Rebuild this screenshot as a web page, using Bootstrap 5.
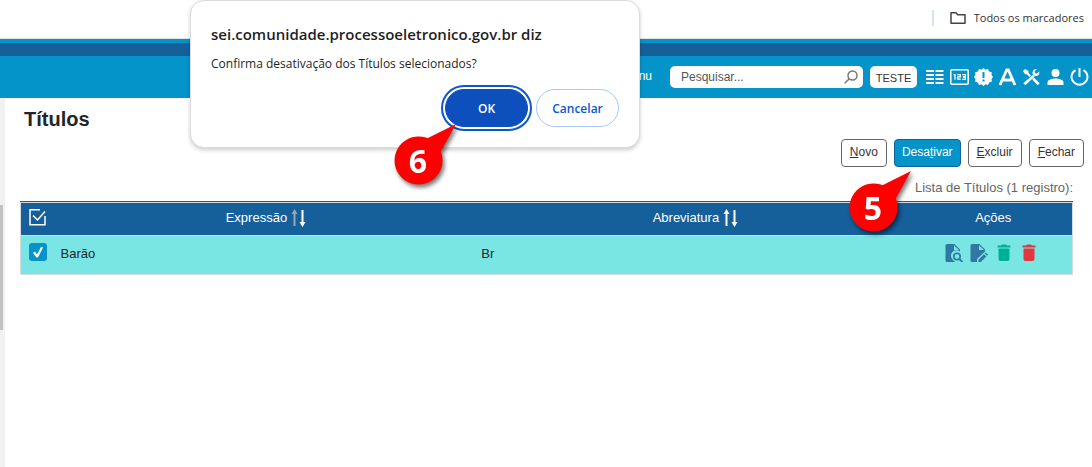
<!DOCTYPE html>
<html lang="pt-br">
<head>
<meta charset="utf-8">
<meta name="viewport" content="width=device-width, initial-scale=1">
<title>SEI - Títulos</title>
<link href="https://cdn.jsdelivr.net/npm/bootstrap@5.3.0/dist/css/bootstrap.min.css" rel="stylesheet">
<style>
:root { --sei-blue:#0494c9; --sei-dark:#155f9b; --chrome:"Open Sans","Noto Sans",sans-serif; }
body { font-family:"Liberation Sans",Arial,sans-serif; font-size:12px; line-height:16px; color:#212529; background:#fff; min-height:100vh; }
svg { display:block; }
.plain { border:0; padding:0; background:none; color:inherit; }
.bookmarks { height:39px; padding:0 8px 3px 0; border-bottom:1px solid #dde1e3; font-family:var(--chrome); font-size:11px; color:#333; }
.bookmarks a { color:inherit; }
.split { width:2px; height:16px; background:#d3e3fd; margin-right:16px; }
.strip { height:17px; background:var(--sei-dark); border-top:4px solid var(--sei-blue); }
.topnav { height:42px; background:var(--sei-blue); padding-right:3px; }
.menu-link { color:#fff; margin-right:18px; padding-bottom:2px; }
.search { width:193px; height:22px; background:#fff; border-radius:5px; padding:0 5px 0 11px; margin-right:7px; }
.search input { font-size:12px; line-height:16px; color:#555; min-width:0; outline:0; }
.search input::placeholder { color:#555; opacity:1; }
.unit { width:47px; height:22px; padding-top:2px; border-radius:5px; background:#fff; color:#333; margin-right:9px; font-size:11px; }
.tools { gap:5px; color:#fff; }
.track { width:5px; background:#f1f1f1; padding-top:107px; }
.thumb { width:3px; height:125px; background:#c1c1c1; }
h1 { font-size:20px; line-height:24px; font-weight:700; padding:9px 0 0 19px; margin:0; }
.commands { gap:7px; padding:8px 8px 0 0; }
.cmd { height:28px; padding:0 8px 2px; border:1px solid #666; border-radius:4px; background:#fff; color:#333; line-height:24px; }
.cmd-on { background:var(--sei-blue); border-color:var(--sei-dark); color:#fff; padding-left:7px; padding-right:7px; }
.listing { margin:0 19px 0 15px; }
.titles { width:100%; table-layout:fixed; caption-side:top; font-size:13px; border:1px solid #d5dce0; border-top:0; }
.titles caption { line-height:16px; text-align:right; color:#666; padding:13px 0 5px; border-bottom:1px solid #495e12; }
.titles th { height:33px; background:var(--sei-dark); color:#fff; font-weight:400; text-align:center; padding:0 0 3px; border-top:1px solid #d5dce0; border-bottom:1px solid #d5dce0; }
.titles td { height:39px; background:#7ae6e4; padding:0 5px 2px; }
.titles th:first-child, .titles td:first-child { padding:0 0 0 8px; text-align:left; }
.col-check { width:35px; } .col-name { width:40%; } .col-act { width:158px; }
.titles .form-check-input { display:block; width:18px; height:18px; margin:0 0 6px; border-radius:3px; border:0; }
.titles .form-check-input:checked { background-color:var(--sei-blue); background-image:url("data:image/svg+xml,%3Csvg xmlns='http://www.w3.org/2000/svg' viewBox='0 0 18 18'%3E%3Cpath fill='%23fff' d='M4 10l2-1.5 2 3L12 4l2 .5-5 10H7.500z'/%3E%3C/svg%3E"); }
.row-tools { gap:7px; padding:0 3px 3px 0; color:#2f78a3; }
.sei-dialog { left:190px; top:0; width:450px; min-height:148px; padding:23px 20px 20px; border:1px solid #dadce0; border-radius:14px; background:#fff; box-shadow:0 2px 4px #0003; font-family:var(--chrome); }
.sei-dialog h2 { font-size:15px; line-height:20px; font-weight:600; margin:0 0 11px; color:#1f1f1f; }
.sei-dialog p { font-size:12px; line-height:18px; margin:0 0 16px; color:#1f1f1f; }
.dlg-btn { height:38px; width:83px; border-radius:19px; font-size:12px; font-weight:600; border:1px solid #a8c7fa; background:#fff; color:#0b57d0; padding:1px 0 0; }
.dlg-ok { background:#0d4fbc; border-color:#0d4fbc; color:#fff; outline:2px solid #0b57d0; outline-offset:2px; }
.callout text { font:700 32px "Open Sans",sans-serif; fill:#fff; text-anchor:middle; }
.callout { filter:drop-shadow(2px 3px 2px #0008); z-index:5; }
.step6 { left:392px; top:120px; } .step5 { right:177px; top:167px; }
</style>
</head>
<body class="d-flex flex-column position-relative">
<div class="bookmarks d-flex align-items-center justify-content-end">
  <span class="split"></span>
  <a href="#" class="d-flex align-items-center gap-2 text-decoration-none">
    <svg width="16" height="14" viewBox="0 0 16 14" fill="none" stroke="#444" stroke-width="1.5"><path d="M1 12.200V1.800h5l1.800 2H15v8.400z" stroke-linejoin="round"/></svg>
    Todos os marcadores</a>
</div>
<div class="strip"></div>
<nav class="topnav d-flex align-items-center justify-content-end">
  <a href="#" class="menu-link text-decoration-none">Menu</a>
  <form class="search d-flex align-items-center">
    <input type="text" class="plain flex-grow-1" placeholder="Pesquisar..." aria-label="Pesquisar">
    <button type="button" class="plain" aria-label="Buscar"><svg width="14" height="14" viewBox="0 0 14 14" fill="none" stroke="#777" stroke-width="1.500"><circle cx="8.500" cy="5.500" r="4.500"/><path d="M5.300 8.700L.7 13.300"/></svg></button>
  </form>
  <button type="button" class="plain unit">TESTE</button>
  <div class="tools d-flex align-items-center">
    <button type="button" class="plain" aria-label="Controle"><svg width="19" height="18" viewBox="0 0 19 18" fill="currentColor"><path d="M0 2h8v2H0zM9.500 2h8v2h-8zM0 6h8v2H0zM9.500 6h8v2h-8zM0 10h8v2H0zM9.500 10h8v2h-8zM0 14h8v2H0zM9.500 14h8v2h-8z"/></svg></button>
    <button type="button" class="plain" aria-label="Numeração"><svg width="19" height="18" viewBox="0 0 19 18" fill="none" stroke="currentColor"><rect x=".8" y="1.800" width="17.400" height="14.400" rx="1" stroke-width="1.500"/><path stroke-width="1.300" d="M3.500 6.700H5v5M7.300 6.700h3v2.200h-2.500v2.300h3M12.300 6.700h3v4.600h-3M12.700 9h2.500"/></svg></button>
    <button type="button" class="plain" aria-label="Novidades"><svg width="19" height="18" viewBox="0 0 19 18" fill="currentColor"><path fill-rule="evenodd" d="M9.500 0l2 1.800 2.600-.8 1 2.500 2.700.8-.3 2.600L19 9l-1.500 2.100.3 2.600-2.700.8-1 2.500-2.600-.8-2 1.800-2-1.800-2.600.8-1-2.500-2.700-.8.3-2.600L0 9l1.500-2.100-.3-2.600 2.700-.8 1-2.500 2.600.8zM8.500 4v6h2V4zm0 7.500v2h2v-2z"/></svg></button>
    <button type="button" class="plain" aria-label="Acessibilidade"><svg width="19" height="18" viewBox="0 0 19 18" fill="none" stroke="currentColor" stroke-width="2.800"><path d="M2 17L8.700 2h1.600L17 17M5 12h9"/></svg></button>
    <button type="button" class="plain" aria-label="Configurações"><svg width="19" height="18" viewBox="0 0 19 18" fill="currentColor"><path d="M1 3l2-2 3.500 2v2l2.500 2.500L7.500 9l-2.700-2.700H3zM1.300 15.200L11 6.700l1.800 1.800L3.300 17.200zM15 1l-2.300 2.300.3 1.900 1.900.3 2.300-2.300c.9 3.200-1.900 5.600-4.900 4.500L10.700 6C10 2.900 12 .5 15 1zM10.200 11.400L12 9.700l5.700 5.500-2 2z"/></svg></button>
    <button type="button" class="plain" aria-label="Usuário"><svg width="19" height="18" viewBox="0 0 19 18" fill="currentColor"><circle cx="9.500" cy="5" r="4"/><path d="M1.500 17v-2.500c0-3 5-4 8-4s8 1 8 4V17z"/></svg></button>
    <button type="button" class="plain" aria-label="Sair"><svg width="19" height="18" viewBox="0 0 19 18" fill="none" stroke="currentColor" stroke-width="2"><path d="M9.500 0v9M5.500 2.200a8 7.800 0 1 0 8 0"/></svg></button>
  </div>
</nav>
<div class="d-flex flex-grow-1">
  <div class="track flex-shrink-0"><div class="thumb"></div></div>
  <main class="flex-grow-1">
    <h1>Títulos</h1>
    <div class="commands d-flex justify-content-end">
      <button type="button" class="cmd"><u>N</u>ovo</button>
      <button type="button" class="cmd cmd-on">Desa<u>t</u>ivar</button>
      <button type="button" class="cmd"><u>E</u>xcluir</button>
      <button type="button" class="cmd"><u>F</u>echar</button>
    </div>
    <div class="listing">
      <table class="titles">
        <caption>Lista de Títulos (1 registro):</caption>
        <colgroup><col class="col-check"><col class="col-name"><col><col class="col-act"></colgroup>
        <thead><tr>
          <th><button type="button" class="plain" aria-label="Selecionar tudo"><svg width="17" height="18" viewBox="0 0 17 18" fill="none" stroke="#fff" stroke-width="1.500"><path d="M11 1.700H1v15h15V8M4 7.500l4.500 4.500 7.500-8.500"/></svg></button></th>
          <th><div class="d-flex align-items-center justify-content-center gap-1">Expressão <svg width="15" height="18" viewBox="0 0 15 18"><path fill="#9da5ad" d="M3.500 0L6.500 5h-2v12h-2V5h-2z"/><path fill="#fff" d="M11.500 18l-3-5h2V1h2v12h2z"/></svg></div></th>
          <th><div class="d-flex align-items-center justify-content-center gap-1">Abreviatura <svg width="15" height="18" viewBox="0 0 15 18" fill="#fff"><path d="M3.500 0L6.500 5h-2v12h-2V5h-2zM11.500 18l-3-5h2V1h2v12h2z"/></svg></div></th>
          <th>Ações</th>
        </tr></thead>
        <tbody><tr>
          <td><input class="form-check-input" type="checkbox" checked aria-label="Barão"></td>
          <td>Barão</td>
          <td>Br</td>
          <td><div class="row-tools d-flex justify-content-center">
            <button type="button" class="plain" aria-label="Consultar"><svg width="18" height="18" viewBox="0 0 18 18"><path fill="currentColor" d="M2 0h7.500L15 5.500v2A5.500 5.500 0 0 0 8 16l2 2H2a1.500 1.500 0 0 1-1.500-1.500v-15A1.500 1.500 0 0 1 2 0z"/><path fill="#7ae6e4" d="M9 1.200V6h5z"/><circle cx="12" cy="12.500" r="3.200" fill="none" stroke="currentColor" stroke-width="1.600"/><path stroke="currentColor" stroke-width="1.800" d="M14.300 15l3.200 3"/></svg></button>
            <button type="button" class="plain" aria-label="Alterar"><svg width="18" height="18" viewBox="0 0 18 18" fill="currentColor"><path d="M2 0h7.500L15 5.500v2L7 15v3H2a1.500 1.500 0 0 1-1.500-1.500v-15A1.500 1.500 0 0 1 2 0z"/><path fill="#7ae6e4" d="M9 1.200V6h5z"/><path d="M8.500 18v-2.300l5.500-5.500 2.300 2.300-5.500 5.500zM14.800 9.500l1-1 2.200 2.300-1 1z"/></svg></button>
            <button type="button" class="plain" aria-label="Desativar"><svg width="18" height="18" viewBox="0 0 18 18" fill="#00b095"><path d="M2.500 1.500h3.500l1-1h4l1 1h3.500v2h-13zM3.500 4.500h11V15a2 2 0 0 1-2 2h-7a2 2 0 0 1-2-2z"/></svg></button>
            <button type="button" class="plain" aria-label="Excluir"><svg width="18" height="18" viewBox="0 0 18 18" fill="#e23640"><path d="M2.500 1.500h3.500l1-1h4l1 1h3.500v2h-13zM3.500 4.500h11V15a2 2 0 0 1-2 2h-7a2 2 0 0 1-2-2z"/></svg></button>
          </div></td>
        </tr></tbody>
      </table>
    </div>
  </main>
</div>
<div class="sei-dialog position-absolute" role="dialog" aria-labelledby="dlg-title">
  <h2 id="dlg-title">sei.comunidade.processoeletronico.gov.br diz</h2>
  <p>Confirma desativação dos Títulos selecionados?</p>
  <div class="d-flex justify-content-end gap-2">
    <button type="button" class="dlg-btn dlg-ok">OK</button>
    <button type="button" class="dlg-btn">Cancelar</button>
  </div>
</div>
<svg class="callout step6 position-absolute" width="68" height="68" viewBox="0 0 68 68"><path fill="#f00" d="M64 4L34 19l14 14zM26.500 16.500a24 24 0 1 0 .1 0z"/><text x="26" y="53">6</text></svg>
<svg class="callout step5 position-absolute" width="68" height="68" viewBox="0 0 68 68"><path fill="#f00" d="M64 4L34 19l14 14zM26.500 16.500a24 24 0 1 0 .1 0z"/><text x="26" y="53">5</text></svg>
<script src="https://cdn.jsdelivr.net/npm/bootstrap@5.3.0/dist/js/bootstrap.bundle.min.js"></script>
</body>
</html>
